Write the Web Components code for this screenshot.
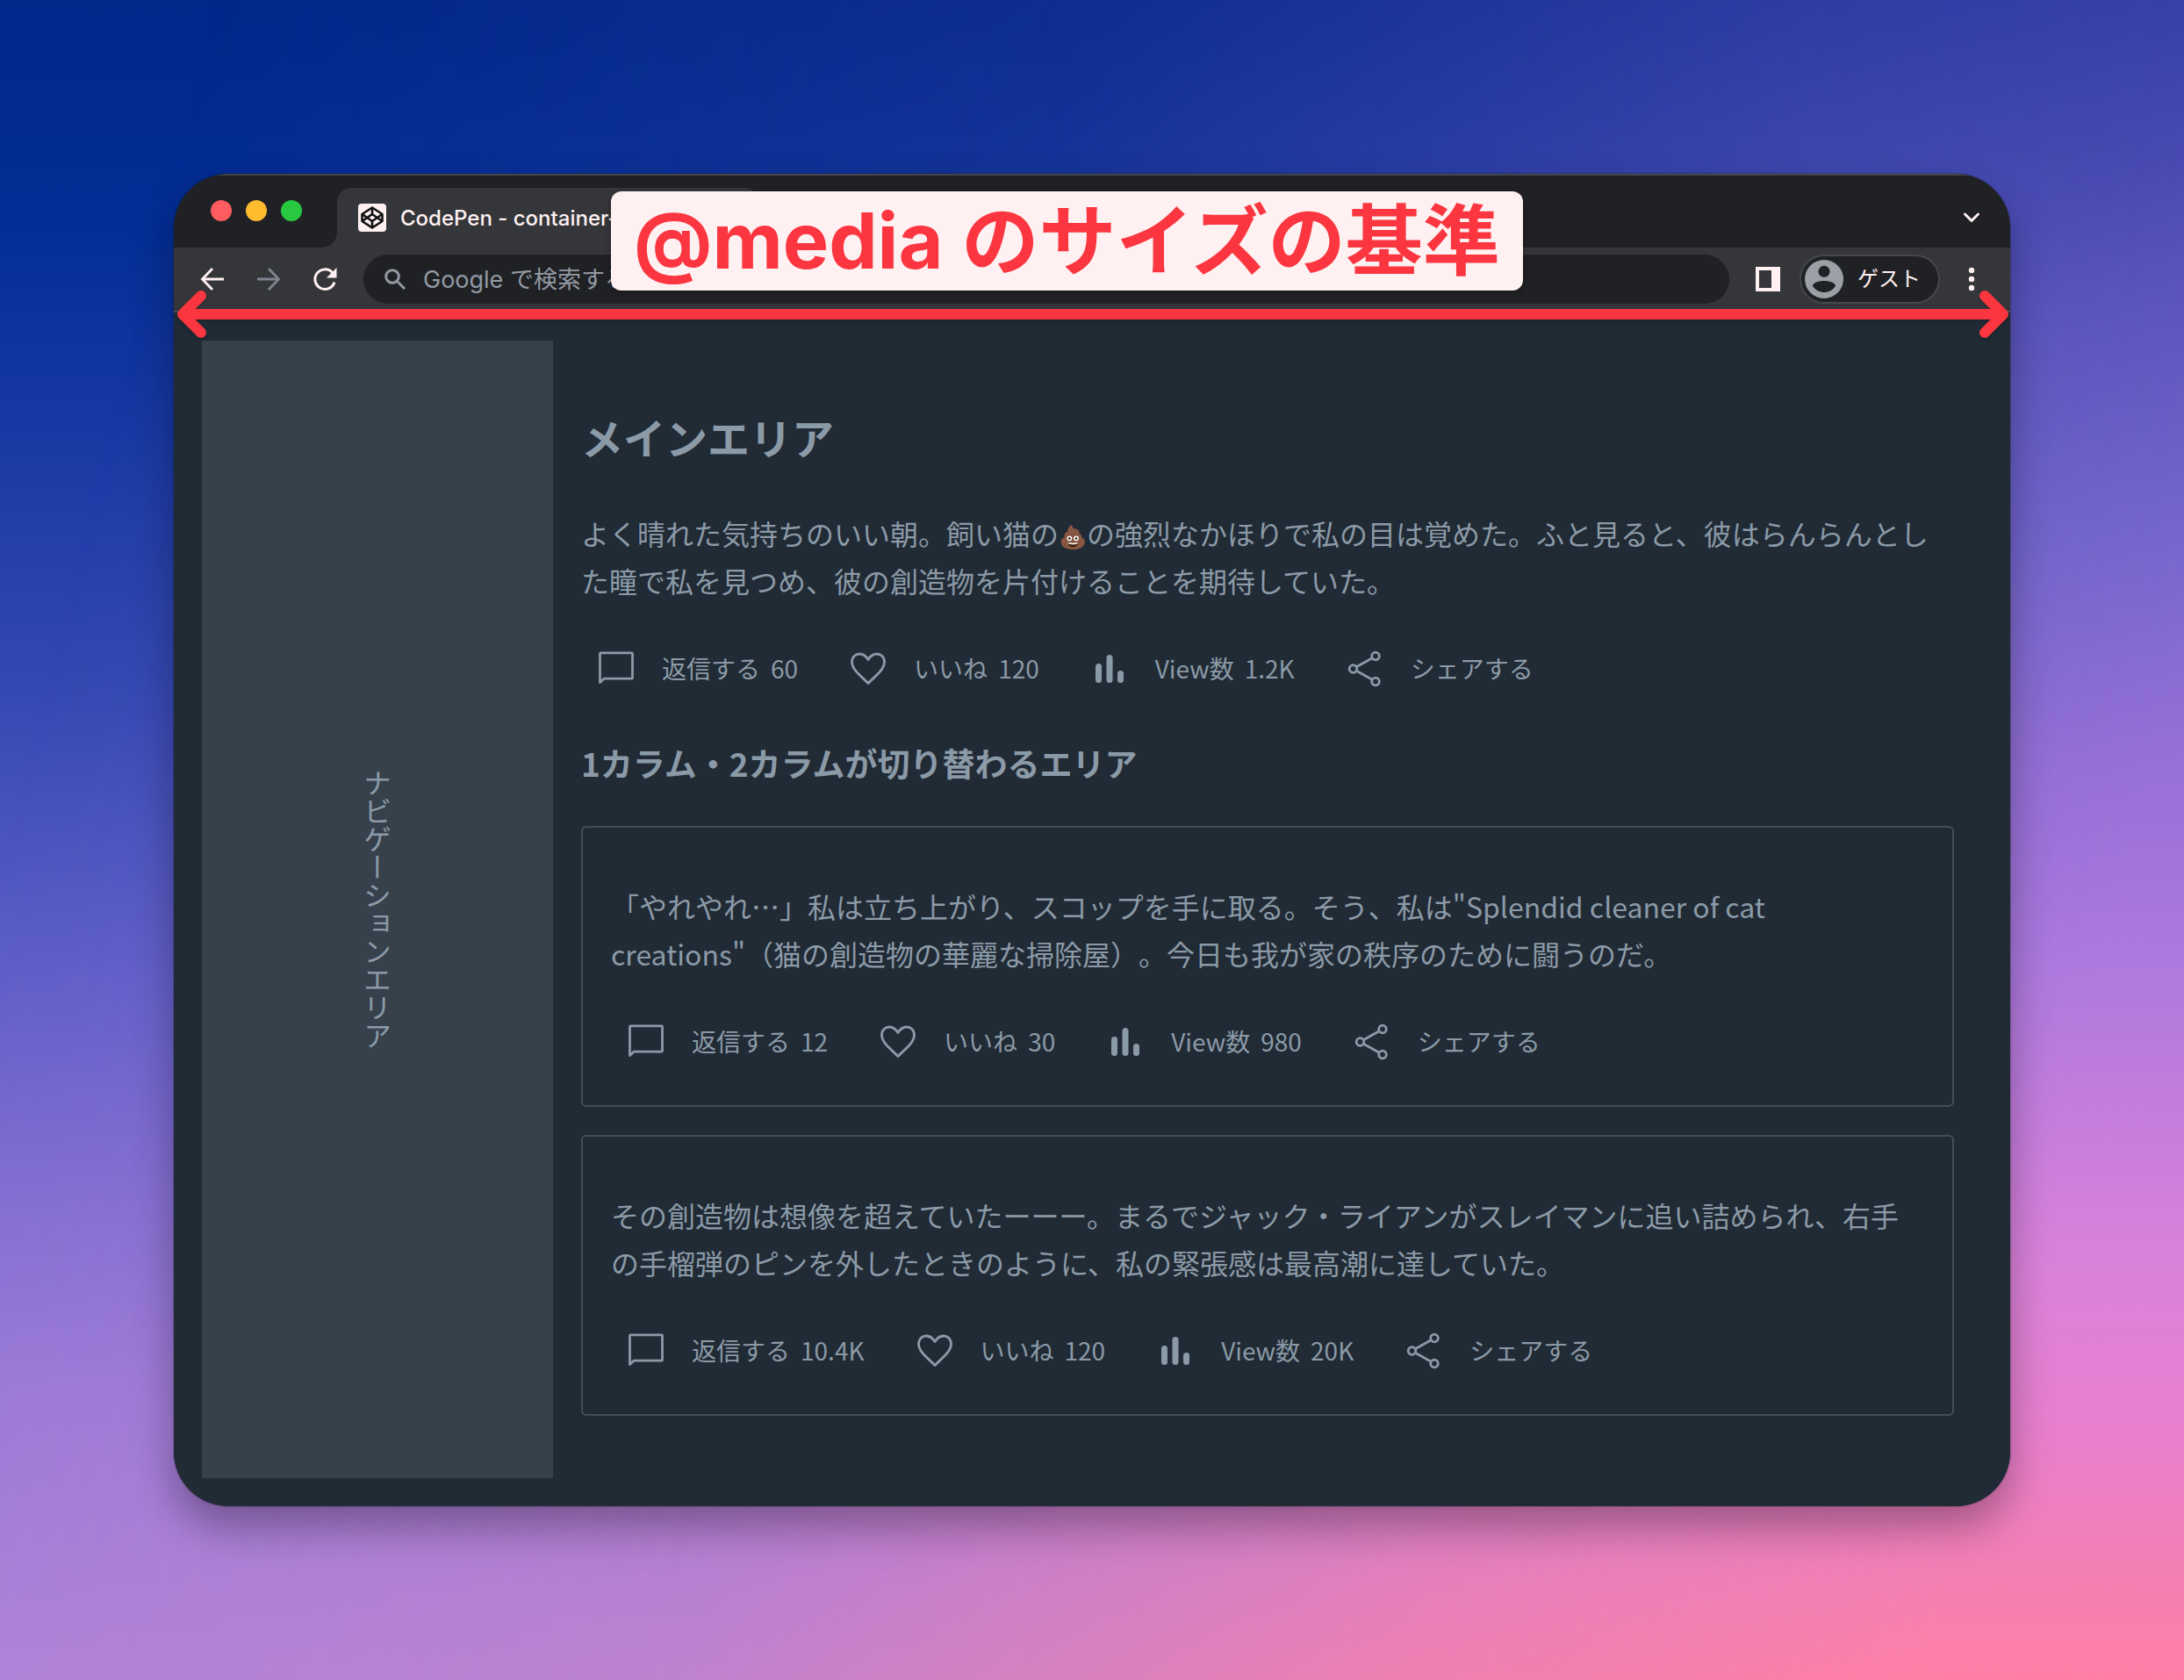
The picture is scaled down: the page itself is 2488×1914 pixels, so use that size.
<!DOCTYPE html>
<html lang="ja">
<head>
<meta charset="utf-8">
<meta name="viewport" content="width=device-width, initial-scale=1">
<title>CodePen - container-</title>
<style>
  html { height: 100%; }
  body {
    margin: 0;
    min-height: 100%;
    box-sizing: border-box;
    padding: 198px;
    position: relative;
    isolation: isolate;
    font-family: Inter, "Noto Sans CJK JP", sans-serif;
    text-spacing-trim: space-all;
    background: linear-gradient(180deg, #00278a 0%, #042e96 14%, #1a3aa4 27%, #3448b3 41%, #5f5fc9 58%, #7f6dd0 70%, #9a7bd8 83%, #ab84dc 100%);
  }
  /* warm right-hand half of the wallpaper, faded in across the page */
  body::before {
    content: "";
    position: absolute;
    inset: 0;
    z-index: -1;
    background: linear-gradient(180deg, #3a42aa 0%, #4a4bb2 9%, #5f57be 18%, #7767cc 32%, #9670d6 45%, #ad79de 57%, #c47ddd 66%, #dc82d9 76%, #e87fcf 85%, #f37fb5 93%, #ff7fa6 100%);
    -webkit-mask-image: linear-gradient(104deg, transparent 8%, rgba(0,0,0,.24) 42%, rgba(0,0,0,.8) 70%, #000 90%);
    mask-image: linear-gradient(104deg, transparent 8%, rgba(0,0,0,.24) 42%, rgba(0,0,0,.8) 70%, #000 90%);
  }
  .emoji { font-size: 26px; line-height: 1; }
</style>
</head>
<body>

<browser-window>
  <browser-tab slot="tabs">CodePen - container-</browser-tab>
  <browser-toolbar slot="toolbar"></browser-toolbar>

  <nav-area>ナビゲーションエリア</nav-area>
  <main-area>
    <area-heading level="2">メインエリア</area-heading>
    <post-body>
      よく晴れた気持ちのいい朝。飼い猫の<span class="emoji">💩</span>の強烈なかほりで私の目は覚めた。ふと見ると、彼はらんらんとした瞳で私を見つめ、彼の創造物を片付けることを期待していた。
      <action-bar slot="actions" replies="60" likes="120" views="1.2K"></action-bar>
    </post-body>
    <area-heading level="3">1カラム・2カラムが切り替わるエリア</area-heading>
    <card-list>
      <post-body framed>
        「やれやれ…」私は立ち上がり、スコップを手に取る。そう、私は"Splendid cleaner of cat creations"（猫の創造物の華麗な掃除屋）。今日も我が家の秩序のために闘うのだ。
        <action-bar slot="actions" replies="12" likes="30" views="980"></action-bar>
      </post-body>
      <post-body framed>
        その創造物は想像を超えていたーーー。まるでジャック・ライアンがスレイマンに追い詰められ、右手の手榴弾のピンを外したときのように、私の緊張感は最高潮に達していた。
        <action-bar slot="actions" replies="10.4K" likes="120" views="20K"></action-bar>
      </post-body>
    </card-list>
  </main-area>

  <width-arrow slot="overlay"></width-arrow>
  <callout-label slot="overlay">@media のサイズの基準</callout-label>
</browser-window>

<script>
const define = (name, html, setup) => {
  const template = document.createElement('template');
  template.innerHTML = html;
  customElements.define(name, class extends HTMLElement {
    constructor() {
      super();
      this.attachShadow({ mode: 'open' }).append(template.content.cloneNode(true));
    }
    connectedCallback() { if (setup) setup(this, this.shadowRoot); }
  });
};

define('browser-window', `
  <style>
    :host { display: block; position: relative; border-radius: 62px;
      box-shadow: 0 24px 48px rgba(0,0,0,.32), 0 0 2px rgba(0,0,0,.5); }
    .frame { border-radius: inherit; overflow: hidden; background: #212b35; }
    .strip { display: flex; align-items: flex-end; height: 84px; box-sizing: border-box;
      background: #202124; box-shadow: inset 0 2px #46474a; padding-right: 34px; }
    .lights { display: flex; gap: 16px; align-self: center; margin: 0 40px 0 42px; }
    .lights i { width: 24px; height: 24px; border-radius: 50%; background: #ff5c60; }
    .lights i:nth-child(2) { background: #febc2e; }
    .lights i:nth-child(3) { background: #28c840; }
    button { margin-left: auto; height: 68px; align-items: center; padding: 0; border: 0; background: none; display: flex; }
    .page { display: flex; gap: 32px; padding: 32px; background: #212b35; border-top: 2px solid #4a4f55;
      font-family: "Noto Sans CJK JP", sans-serif; color: #8b9aa7; }
  </style>
  <div class="frame">
    <div class="strip">
      <div class="lights"><i></i><i></i><i></i></div>
      <slot name="tabs"></slot>
      <button aria-label="タブを検索"><svg width="20" height="14" viewBox="0 0 20 14" fill="none" stroke="#fff1f2" stroke-width="3" stroke-linecap="round" stroke-linejoin="round"><path d="M2.500 3l7.500 7.500L17.500 3"/></svg></button>
    </div>
    <slot name="toolbar"></slot>
    <div class="page"><slot></slot></div>
  </div>
  <slot name="overlay"></slot>
`);

define('browser-tab', `
  <style>
    :host { display: flex; align-items: center; gap: 16px; box-sizing: border-box; width: 480px; height: 68px;
      padding: 0 24px; background: #35363a; border-radius: 16px 16px 0 0; position: relative;
      font-size: 24px; font-weight: 500; color: #fff1f2; white-space: nowrap; }
    :host::before { content: ""; position: absolute; left: -16px; bottom: 0; width: 16px; height: 16px;
      background: radial-gradient(circle at 0 0, transparent 15px, #35363a 16px); }
    svg { flex: none; }
  </style>
  <svg width="32" height="32" viewBox="0 0 32 32"><rect width="32" height="32" rx="4" fill="#fff1f2"/>
    <g fill="none" stroke="#111" stroke-width="2.600" stroke-linejoin="round"><path d="M16 4.500L27.500 12v8L16 27.500 4.500 20v-8z"/><path d="M4.500 12L16 20l11.500-8M4.500 20L16 12l11.500 8M16 4.500V12M16 20v7.500"/></g></svg>
  <slot></slot>
`);

define('browser-toolbar', `
  <style>
    :host { display: flex; align-items: center; height: 72px; box-sizing: border-box; padding: 0 40px 0 28px;
      background: #35363a; }
    button { display: flex; align-items: center; padding: 0; border: 0; background: none; font: inherit; color: #fff1f2; }
    .nav { display: flex; gap: 32px; margin-right: 28px; }
    .dim { color: #7f8690; }
    label { flex: 1; display: flex; align-items: center; gap: 20px; height: 56px; padding: 0 24px; border-radius: 28px;
      background: #202124; color: #9299a2; }
    input { flex: 1; min-width: 0; border: 0; padding: 0; background: none; outline: 0; font: inherit; font-size: 27px; color: inherit; }
    input::placeholder { color: inherit; opacity: 1; }
    .panel { margin: 0 22px 0 30px; }
    .guest { box-sizing: border-box; width: 160px; height: 56px; border: 2px solid #46474b; border-radius: 28px;
      background: #202124; padding-left: 4px; gap: 16px; font-size: 24px; font-weight: 400; line-height: 32px; }
    .more { margin-left: 32px; }
  </style>
  <div class="nav">
    <button aria-label="戻る"><svg width="32" height="32" viewBox="0 0 32 32" fill="none" stroke="currentColor" stroke-width="2.800"><path d="M29 16H5M16 4L4.500 16 16 28"/></svg></button>
    <button aria-label="進む" class="dim"><svg width="32" height="32" viewBox="0 0 32 32" fill="none" stroke="currentColor" stroke-width="2.800"><path d="M3 16h24M16 4l11.500 12L16 28"/></svg></button>
    <button aria-label="再読み込み"><svg width="32" height="32" viewBox="0 0 32 32"><path d="M27 19.500A11.300 11.300 0 1 1 24.500 8.500" fill="none" stroke="currentColor" stroke-width="3"/><path d="M29.500 3v11.500H18z" fill="currentColor"/></svg></button>
  </div>
  <label>
    <svg width="24" height="24" viewBox="0 0 24 24" fill="none" stroke="currentColor" stroke-width="3"><circle cx="9" cy="9" r="7.300"/><path d="M14.500 14.500l8.500 8.500"/></svg>
    <input type="text" aria-label="アドレスバー" placeholder="Google で検索する">
  </label>
  <button class="panel" aria-label="サイドパネル"><svg width="28" height="28" viewBox="0 0 28 28"><path fill="currentColor" fill-rule="evenodd" d="M0 0h28v28H0zM4 4v20h14V4z"/></svg></button>
  <button class="guest"><svg width="44" height="44" viewBox="0 0 44 44"><circle cx="22" cy="22" r="22" fill="#9aa0a6"/><circle cx="22" cy="13.300" r="6.500" fill="#202124"/><path d="M9 30c0-4 7-6 13-6s13 2 13 6c-3 4.500-8 7-13 7s-10-2.500-13-7z" fill="#202124"/></svg><span>ゲスト</span></button>
  <button class="more" aria-label="メニュー"><svg width="8" height="28" viewBox="0 0 8 28" fill="currentColor"><circle cx="4" cy="4" r="3.200"/><circle cx="4" cy="14" r="3.200"/><circle cx="4" cy="24" r="3.200"/></svg></button>
`);

define('nav-area', `
  <style>
    :host { flex: none; width: 400px; display: flex; background: #37414c; }
    nav { margin: auto; writing-mode: vertical-rl; font-size: 32px; line-height: 54px; }
  </style>
  <nav><slot></slot></nav>
`);

define('main-area', `
  <style>
    :host { flex: 1; min-width: 0; display: block; padding: 32px 32px 71px 0; }
  </style>
  <main><slot></slot></main>
`);

define('area-heading', `
  <style>
    :host { display: block; font-weight: 700; }
    h2, h3 { font-size: inherit; font-weight: inherit; margin: 0; }
    :host([level="2"]) { font-size: 48px; line-height: 82px; margin: 36px 0 42px; }
    :host([level="3"]) { font-size: 37px; line-height: 64px; margin: 35px 0 40px; }
  </style>
`, (host, root) => {
  const h = document.createElement('h' + host.getAttribute('level'));
  h.append(document.createElement('slot'));
  root.append(h);
});

define('card-list', `
  <style>:host { display: flex; flex-direction: column; gap: 32px; }</style>
  <slot></slot>
`);

define('post-body', `
  <style>
    :host { display: block; }
    :host([framed]) { border: 2px solid #434e59; border-radius: 6px; padding: 32px; }
    p { margin: 0 0 34px; font-size: 32px; line-height: 54px; }
    :host([framed]) p { margin-top: 30px; }
  </style>
  <article><p><slot></slot></p><slot name="actions"></slot></article>
`);

define('action-bar', `
  <style>
    :host { display: flex; flex-wrap: wrap; align-items: center; gap: 0 56px; min-height: 80px; padding-left: 16px; }
  </style>
  <action-button icon="reply">返信する</action-button>
  <action-button icon="like">いいね</action-button>
  <action-button icon="view">View数</action-button>
  <action-button icon="share">シェアする</action-button>
`, (host, root) => {
  const [r, l, v] = root.querySelectorAll('action-button');
  r.setAttribute('count', host.getAttribute('replies'));
  l.setAttribute('count', host.getAttribute('likes'));
  v.setAttribute('count', host.getAttribute('views'));
});

const ICONS = {
  reply: '<path d="M5.500 39.500V6.700Q5.500 5.800 6.400 5.800H41.600Q42.500 5.800 42.500 6.700V34.300Q42.500 35.200 41.600 35.200H10z"/>',
  like: '<path d="M24 40.500C17 33 5.500 25.500 5.500 16 5.500 10.500 9.500 7 14 7c4.500 0 7.500 2.500 10 6.500C26.500 9.500 29.500 7 34 7c4.500 0 8.500 3.500 8.500 9 0 9.500-11.500 17-18.500 24.500z"/>',
  view: '<g fill="currentColor" stroke="none"><rect x="8" y="18" width="7" height="22" rx="3.500"/><rect x="20.500" y="8" width="7" height="32" rx="3.500"/><rect x="33" y="26" width="7" height="14" rx="3.500"/></g>',
  share: '<circle cx="36" cy="9.500" r="4.300"/><circle cx="10.500" cy="24" r="4.300"/><circle cx="36" cy="38.500" r="4.300"/><path d="M14.300 21.800L32.200 11.700M14.300 26.200l17.900 10.100"/>'
};
class ActionButton extends HTMLElement {
  static observedAttributes = ['count'];
  constructor() {
    super();
    this.attachShadow({ mode: 'open' }).innerHTML = `
      <style>
        :host { display: block; }
        button { display: flex; align-items: center; gap: 28px; padding: 0; border: 0; background: none; color: inherit;
          font: inherit; font-size: 28px; line-height: 46px; }
        .text { display: flex; gap: 12px; padding-bottom: 2px; }
        b { font-weight: inherit; }
        b:empty { display: none; }
      </style>
      <button><svg width="48" height="48" viewBox="0 0 48 48" fill="none" stroke="currentColor" stroke-width="2.800" stroke-linejoin="round"></svg><span class="text"><span><slot></slot></span><b></b></span></button>`;
  }
  connectedCallback() { this.shadowRoot.querySelector('svg').innerHTML = ICONS[this.getAttribute('icon')]; }
  attributeChangedCallback(name, old, value) { this.shadowRoot.querySelector('b').textContent = value; }
}
customElements.define('action-button', ActionButton);

define('width-arrow', `
  <style>
    :host { position: absolute; left: 4px; right: 2px; top: 133px; display: flex; align-items: center; height: 54px;
      filter: drop-shadow(0 2px 2px rgba(0,0,0,.2)); }
    i { flex: 1; height: 12px; margin: 0 -27px; background: #fb3640; }
  </style>
  <svg width="34" height="54" viewBox="0 0 34 54" fill="none" stroke="#fb3640" stroke-width="12" stroke-linecap="round" stroke-linejoin="round"><path d="M27 6L6 27l21 21"/></svg>
  <i></i>
  <svg width="34" height="54" viewBox="0 0 34 54" fill="none" stroke="#fb3640" stroke-width="12" stroke-linecap="round" stroke-linejoin="round"><path d="M7 6l21 21L7 48"/></svg>
`);

define('callout-label', `
  <style>
    :host { position: absolute; left: 498px; top: 20px; padding: 0 26px; border-radius: 12px; background: #fff1f2;
      color: #fb3640; font-size: 88px; line-height: 113px; font-weight: 700; white-space: nowrap;
      box-shadow: 0 2px 6px rgba(0,0,0,.3); }
  </style>
  <slot></slot>
`);
</script>
</body>
</html>
